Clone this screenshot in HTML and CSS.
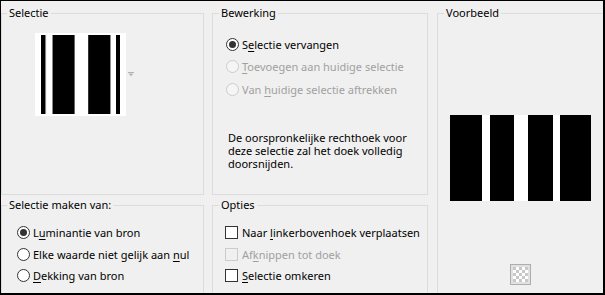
FILE: index.html
```html
<!DOCTYPE html>
<html lang="nl">
<head>
<meta charset="utf-8">
<title>Selectie uit masker</title>
<link rel="stylesheet" href="styles.css">
</head>
<body>
<div class="dialog">
  <fieldset class="group g-selectie">
    <legend>Selectie</legend>
    <div class="source">
      <svg class="source-img" width="91" height="83" viewBox="0 0 91 83">
        <rect width="91" height="83" fill="#fff"/>
        <rect x="6" y="2" width="4.4" height="79" fill="#000"/>
        <rect x="10.4" y="2" width="0.7" height="79" fill="#777"/>
        <rect x="17" y="2" width="1" height="79" fill="#888"/>
        <rect x="18" y="2" width="21" height="79" fill="#000"/>
        <rect x="39" y="2" width="1" height="79" fill="#666"/>
        <rect x="53" y="2" width="1" height="79" fill="#333"/>
        <rect x="54" y="2" width="21" height="79" fill="#000"/>
        <rect x="75" y="2" width="0.8" height="79" fill="#777"/>
        <rect x="81" y="2" width="4" height="79" fill="#000"/>
      </svg>
      <svg class="drop-arrow" width="6" height="5" viewBox="0 0 6 5">
        <rect x="0" y="0" width="6" height="1" fill="#b4b4b4"/>
        <polygon points="0.5,1.5 5.5,1.5 3,4.2" fill="#b4b4b4"/>
      </svg>
    </div>
  </fieldset>

  <fieldset class="group g-bewerking">
    <legend>Bewerking</legend>
    <div class="options">
      <label class="opt"><span class="radio is-checked"></span><span>S<u>e</u>lectie vervangen</span></label>
      <label class="opt is-disabled"><span class="radio"></span><span><u>T</u>oevoegen aan huidige selectie</span></label>
      <label class="opt is-disabled"><span class="radio"></span><span>Van <u>h</u>uidige selectie aftrekken</span></label>
    </div>
    <p class="note"><span class="note-line">De oorspronkelijke rechthoek voor</span><span class="note-line">deze selectie zal het doek volledig</span><span class="note-line">doorsnijden.</span></p>
  </fieldset>

  <fieldset class="group g-voorbeeld">
    <legend>Voorbeeld</legend>
    <svg class="preview-img" width="141" height="86" viewBox="0 0 141 86">
      <rect width="141" height="86" fill="#fff"/>
      <rect x="0" y="0" width="32" height="86" fill="#000"/>
      <rect x="40" y="0" width="24" height="86" fill="#000"/>
      <rect x="78" y="0" width="25" height="86" fill="#000"/>
      <rect x="110" y="0" width="31" height="86" fill="#000"/>
    </svg>
    <span class="checker-btn">
      <svg width="15" height="15" viewBox="0 0 15 15">
        <rect width="15" height="15" fill="#fff"/>
        <path d="M0 0h3v3H0zM6 0h3v3H6zM12 0h3v3h-3zM3 3h3v3H3zM9 3h3v3H9zM0 6h3v3H0zM6 6h3v3H6zM12 6h3v3h-3zM3 9h3v3H3zM9 9h3v3H9zM0 12h3v3H0zM6 12h3v3H6zM12 12h3v3h-3z" fill="#c8c8c8"/>
      </svg>
    </span>
  </fieldset>

  <fieldset class="group g-maken">
    <legend>Selectie maken van:</legend>
    <div class="options compact">
      <label class="opt"><span class="radio is-checked"></span><span>L<u>u</u>minantie van bron</span></label>
      <label class="opt"><span class="radio"></span><span>Elke waarde niet gelijk aan <u>n</u>ul</span></label>
      <label class="opt"><span class="radio"></span><span><u>D</u>ekking van bron</span></label>
    </div>
  </fieldset>

  <fieldset class="group g-opties">
    <legend>Opties</legend>
    <div class="options compact">
      <label class="opt"><span class="check"></span><span>Naar <u>l</u>inkerbovenhoek verplaatsen</span></label>
      <label class="opt is-disabled"><span class="check"></span><span>Af<u>k</u>nippen tot doek</span></label>
      <label class="opt"><span class="check"></span><span><u>S</u>electie omkeren</span></label>
    </div>
  </fieldset>
</div>
</body>
</html>
```

FILE: styles.css
```css
* { box-sizing: border-box; }

html, body {
  margin: 0;
  padding: 0;
  background: #f0f0f0;
}

body {
  font-family: "Noto Sans", "Open Sans", sans-serif;
  font-size: 11px;
  color: #000;
}

.dialog {
  width: 605px;
  height: 295px;
  border: solid #000;
  border-width: 1px 2px 2px 1px;
  padding-top: 4px;
  background: #f0f0f0;
  display: grid;
  grid-template-columns: 203px 216px 168px;
  grid-template-rows: 190px 120px;
  column-gap: 8px;
  row-gap: 2px;
  overflow: hidden;
}

.group {
  margin: 0;
  padding: 0;
  min-width: 0;
  border: 1px solid #dcdcdc;
}

.group legend {
  margin-left: 5px;
  padding: 0 2px;
  line-height: 16px;
  height: 16px;
}

.g-bewerking legend,
.g-opties legend,
.g-voorbeeld legend { margin-left: 6px; }

.g-voorbeeld {
  grid-column: 3;
  grid-row: 1 / 3;
  margin-left: 1px;
  display: flex;
  flex-direction: column;
  align-items: center;
}

/* Selectie */
.source {
  display: flex;
  align-items: center;
  gap: 2px;
  margin: 12px 0 0 33px;
}
.source-img, .drop-arrow, .preview-img { display: block; }

/* options */
.options {
  display: flex;
  flex-direction: column;
  margin-top: 12px;
  padding-left: 13px;
}
.options.compact { margin-top: 9px; }
.g-maken .options { padding-left: 15px; }
.g-opties .options { padding-left: 12px; }

.opt {
  display: flex;
  align-items: center;
  gap: 3px;
  height: 22.5px;
  white-space: nowrap;
}
.compact .opt { height: 21.5px; }
.g-opties .opt { gap: 4px; }

.opt u { text-underline-offset: 2px; text-decoration-thickness: 1px; }

.radio {
  flex: none;
  width: 13px;
  height: 13px;
  border: 1px solid #333;
  border-radius: 50%;
  background: #fff;
  display: flex;
  align-items: center;
  justify-content: center;
}
.radio.is-checked::after {
  content: "";
  width: 7px;
  height: 7px;
  border-radius: 50%;
  background: #333;
}

.check {
  flex: none;
  width: 13px;
  height: 13px;
  border: 1px solid #333;
  background: #fff;
}

.is-disabled { color: #a0a0a0; }
.is-disabled .radio { border-color: #cccccc; background: #f5f5f5; }
.is-disabled .check { border-color: #cccccc; background: #f0f0f0; }

.note {
  margin: 30px 0 0 15px;
  display: flex;
  flex-direction: column;
}
.note-line {
  display: block;
  height: 13px;
  line-height: 13px;
  white-space: nowrap;
}

/* Voorbeeld */
.preview-img { margin-top: 94px; }

.checker-btn {
  margin-top: 63px;
  width: 21px;
  height: 21px;
  border: 1px solid #adadad;
  background: #e1e1e1;
  display: flex;
  align-items: center;
  justify-content: center;
}
.checker-btn svg { display: block; }
```
